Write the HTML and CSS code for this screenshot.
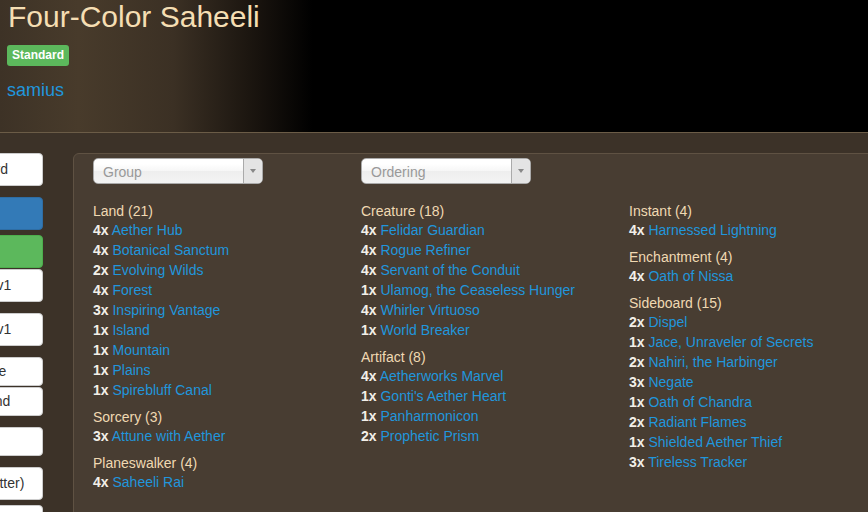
FILE: index.html
```html
<!DOCTYPE HTML>
<html lang="en">

<head>
    <meta charset="utf-8">
    <title>Four-Color Saheeli</title>

    <link rel="stylesheet" href="styles.css">
</head>

<body>
    <div class="deck-header">
        <h1 class="deck-title">Four-Color Saheeli</h1>
        <div class="deck-format"><span class="label-format">Standard</span></div>
        <a class="deck-author" href="#">samius</a>
    </div>

    <div class="page">

        <div class="sidebar">
            <button class="side-btn">Copy to Clipboard</button>
            <button class="side-btn btn-blue gap">Edit</button>
            <button class="side-btn btn-green near">Clone</button>
            <button class="side-btn tight">Export to Arena v1</button>
            <button class="side-btn gap">Export to Forge v1</button>
            <button class="side-btn small gap">View Mana Curve</button>
            <button class="side-btn small tight">Test Sample Hand</button>
            <button class="side-btn small gap link-text">Quick Comparer</button>
            <button class="side-btn gap">Print Proxies (better)</button>
            <button class="side-btn near">Share</button>
        </div>

        <div class="panel">
            <div class="deck-grid">
                <div class="fake-select">
                    <span class="fake-select-text">Group</span>
                    <span class="fake-select-arrow"><span class="caret"></span></span>
                </div>
                <div class="fake-select">
                    <span class="fake-select-text">Ordering</span>
                    <span class="fake-select-arrow"><span class="caret"></span></span>
                </div>
                <div></div>

                <!-- column 1 -->
                <div class="deck-col">
                    <div class="section">
                        <div class="section-title">Land (21)</div>
                        <div class="card"><b>4x</b> <a href="#">Aether Hub</a></div>
                        <div class="card"><b>4x</b> <a href="#">Botanical Sanctum</a></div>
                        <div class="card"><b>2x</b> <a href="#">Evolving Wilds</a></div>
                        <div class="card"><b>4x</b> <a href="#">Forest</a></div>
                        <div class="card"><b>3x</b> <a href="#">Inspiring Vantage</a></div>
                        <div class="card"><b>1x</b> <a href="#">Island</a></div>
                        <div class="card"><b>1x</b> <a href="#">Mountain</a></div>
                        <div class="card"><b>1x</b> <a href="#">Plains</a></div>
                        <div class="card"><b>1x</b> <a href="#">Spirebluff Canal</a></div>
                    </div>
                    <div class="section">
                        <div class="section-title">Sorcery (3)</div>
                        <div class="card"><b>3x</b> <a href="#">Attune with Aether</a></div>
                    </div>
                    <div class="section">
                        <div class="section-title">Planeswalker (4)</div>
                        <div class="card"><b>4x</b> <a href="#">Saheeli Rai</a></div>
                    </div>
                </div>

                <!-- column 2 -->
                <div class="deck-col">
                    <div class="section">
                        <div class="section-title">Creature (18)</div>
                        <div class="card"><b>4x</b> <a href="#">Felidar Guardian</a></div>
                        <div class="card"><b>4x</b> <a href="#">Rogue Refiner</a></div>
                        <div class="card"><b>4x</b> <a href="#">Servant of the Conduit</a></div>
                        <div class="card"><b>1x</b> <a href="#">Ulamog, the Ceaseless Hunger</a></div>
                        <div class="card"><b>4x</b> <a href="#">Whirler Virtuoso</a></div>
                        <div class="card"><b>1x</b> <a href="#">World Breaker</a></div>
                    </div>
                    <div class="section">
                        <div class="section-title">Artifact (8)</div>
                        <div class="card"><b>4x</b> <a href="#">Aetherworks Marvel</a></div>
                        <div class="card"><b>1x</b> <a href="#">Gonti's Aether Heart</a></div>
                        <div class="card"><b>1x</b> <a href="#">Panharmonicon</a></div>
                        <div class="card"><b>2x</b> <a href="#">Prophetic Prism</a></div>
                    </div>
                </div>

                <!-- column 3 -->
                <div class="deck-col">
                    <div class="section">
                        <div class="section-title">Instant (4)</div>
                        <div class="card"><b>4x</b> <a href="#">Harnessed Lightning</a></div>
                    </div>
                    <div class="section">
                        <div class="section-title">Enchantment (4)</div>
                        <div class="card"><b>4x</b> <a href="#">Oath of Nissa</a></div>
                    </div>
                    <div class="section">
                        <div class="section-title">Sideboard (15)</div>
                        <div class="card"><b>2x</b> <a href="#">Dispel</a></div>
                        <div class="card"><b>1x</b> <a href="#">Jace, Unraveler of Secrets</a></div>
                        <div class="card"><b>2x</b> <a href="#">Nahiri, the Harbinger</a></div>
                        <div class="card"><b>3x</b> <a href="#">Negate</a></div>
                        <div class="card"><b>1x</b> <a href="#">Oath of Chandra</a></div>
                        <div class="card"><b>2x</b> <a href="#">Radiant Flames</a></div>
                        <div class="card"><b>1x</b> <a href="#">Shielded Aether Thief</a></div>
                        <div class="card"><b>3x</b> <a href="#">Tireless Tracker</a></div>
                    </div>
                </div>
            </div>
        </div>

    </div>
</body>

</html>
```

FILE: styles.css
```css
*{
    box-sizing: border-box;
    padding: 0;
    margin: 0;
}

html, body{
    height: 100%;
}

body{
    font-family: "Liberation Sans", Arial, sans-serif;
    font-size: 14px;
    background-color: #3c3228;
    overflow: hidden;
}

a{
    color: #2196dc;
    text-decoration: none;
}

/* header */

.deck-header{
    height: 133px;
    padding-left: 8px;
    border-bottom: 1px solid #6b5c47;
    background: linear-gradient(to right, #3d3226 0%, #483b2b 9%, #3b3024 20%, #17120d 30%, #000 36%);
}

.deck-title{
    font-size: 30px;
    line-height: 33px;
    font-weight: normal;
    color: #f5deb3;
}

.deck-format{
    margin-top: 12px;
    margin-left: -1px;
    height: 21px;
}

.label-format{
    display: inline-block;
    background-color: #5cb85c;
    color: #fff;
    font-size: 12px;
    font-weight: bold;
    line-height: 13px;
    padding: 4px 5px;
    border-radius: 3px;
}

.deck-author{
    display: inline-block;
    margin-top: 14px;
    margin-left: -1px;
    font-size: 18px;
    line-height: 20px;
}

/* page */

.page{
    display: flex;
    padding-top: 20px;
    height: 100%;
    background-color: #3c3228;
}

.sidebar{
    flex: 0 0 160px;
    margin-left: -117px;
    display: flex;
    flex-direction: column;
}

.side-btn{
    font-family: "Liberation Sans", Arial, sans-serif;
    font-size: 14px;
    line-height: 19px;
    padding: 6px 12px;
    text-align: left;
    white-space: nowrap;
    color: #333;
    background-color: #fff;
    border: 1px solid #ccc;
    border-radius: 4px;
}

.side-btn.small{
    padding: 4px 12px;
}

.side-btn.gap{
    margin-top: 11px;
}

.side-btn.near{
    margin-top: 5px;
}

.side-btn.tight{
    margin-top: 1px;
}

.btn-blue{
    background-color: #337ab7;
    border-color: #2e6da4;
    color: #fff;
}

.btn-green{
    background-color: #5cb85c;
    border-color: #4cae4c;
    color: #fff;
}

.link-text{
    color: #2196dc;
}

.panel{
    flex: 0 0 830px;
    margin-left: 30px;
    background-color: #483d32;
    border: 1px solid #5f5243;
    border-radius: 6px 0 0 0;
    padding: 4px 0 0 19px;
}

.deck-grid{
    display: grid;
    grid-template-columns: 268px 268px 268px;
    row-gap: 18px;
}

.fake-select{
    width: 170px;
    height: 26px;
    display: flex;
    border: 1px solid #aaa;
    border-radius: 5px;
    background: linear-gradient(#fff 20%, #f6f6f6 50%, #eee 52%, #f4f4f4 100%);
    overflow: hidden;
}

.fake-select-text{
    flex: 1;
    padding-left: 9px;
    line-height: 26px;
    font-size: 14px;
    color: #999;
}

.fake-select-arrow{
    width: 19px;
    border-left: 1px solid #aaa;
    background-color: #e4e4e4;
    display: flex;
    align-items: center;
    justify-content: center;
}

.caret{
    width: 0;
    height: 0;
    border-left: 3px solid transparent;
    border-right: 3px solid transparent;
    border-top: 4px solid #888;
}

.section + .section{
    margin-top: 8px;
}

.section-title{
    line-height: 18px;
    color: #f0d9b2;
}

.card{
    line-height: 20px;
    color: #f3efe8;
}

.card b{
    font-weight: bold;
}
```
